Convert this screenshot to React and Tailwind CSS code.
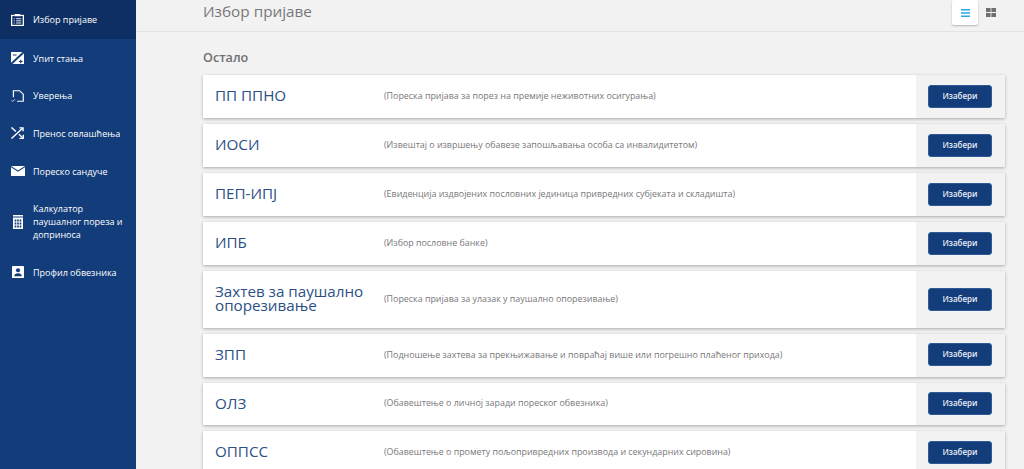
const FONT = { fontFamily: '"Open Sans", sans-serif' };

const IconList = () => (
  <svg width="13" height="12" viewBox="0 0 14 14" preserveAspectRatio="none" fill="none">
    <rect x="0.7" y="1.7" width="12.6" height="11.6" stroke="white" strokeWidth="1.4" />
    <rect x="4" y="0" width="6" height="2.6" fill="white" />
    <path d="M3 5.5h1M5.5 5.5h5.5M3 8h1M5.5 8h5.5M3 10.5h1M5.5 10.5h5.5" stroke="white" strokeWidth="1" />
  </svg>
);

const IconBalance = () => (
  <svg width="13" height="12" viewBox="0 0 14 14" preserveAspectRatio="none">
    <path d="M0 0h14v14H0z" fill="white" />
    <path d="M14 0v1.6L1.6 14H0v-1.6L12.4 0z" fill="#123c7a" />
    <path d="M2 3h4v1.2H2zM8.5 10.4h4v1.2h-4zM9.9 9h1.2v4H9.9z" fill="#123c7a" />
  </svg>
);

const IconCert = () => (
  <svg width="13" height="12" viewBox="0 0 14 14" preserveAspectRatio="none" fill="none" stroke="white" strokeWidth="1.3">
    <path d="M2.6 8.5V0.8h6.6l4 4v8.4H6.5" />
    <path d="M0.5 12l1.4 1.4 2.4-2.6" strokeWidth="0.9" />
  </svg>
);

const IconShuffle = () => (
  <svg width="13" height="12" viewBox="0 0 14 14" preserveAspectRatio="none" fill="none" stroke="white" strokeWidth="1.5">
    <path d="M0.5 0.5L5.2 5.2M8.5 8.5L13 13M0.5 13.5L12.5 1.5" />
    <path d="M9 1h4v4M13.2 9v4.2H9" />
  </svg>
);

const IconMail = () => (
  <svg width="14" height="10" viewBox="0 0 14 11" preserveAspectRatio="none">
    <path d="M0 0h14L7 5z" fill="white" />
    <path d="M0 1.4L7 6.4l7-5V11H0z" fill="white" />
  </svg>
);

const IconCalc = () => (
  <svg width="10" height="14" viewBox="0 0 12 14" preserveAspectRatio="none">
    <rect x="0" y="0" width="12" height="1.5" fill="white" />
    <rect x="0" y="2.5" width="12" height="11.5" fill="white" />
    <path d="M2 4.5h2v2H2zM5 4.5h2v2H5zM8 4.5h2v2H8zM2 7.5h2v2H2zM5 7.5h2v2H5zM8 7.5h2v2H8zM2 10.5h2v2H2zM5 10.5h2v2H5zM8 10.5h2v2H8z" fill="#123c7a" />
  </svg>
);

const IconProfile = () => (
  <svg width="12" height="12" viewBox="0 0 13 13">
    <rect x="0" y="0" width="13" height="13" rx="0.5" fill="white" />
    <circle cx="6.5" cy="4.6" r="2.2" fill="#123c7a" />
    <path d="M2.4 11c0-2.2 1.8-3.2 4.1-3.2s4.1 1 4.1 3.2z" fill="#123c7a" />
  </svg>
);

const navItems = [
  { label: "Избор пријаве", icon: <IconList />, active: true, height: "h-[39px]" },
  { label: "Упит стања", icon: <IconBalance />, height: "h-[38px]" },
  { label: "Уверења", icon: <IconCert />, height: "h-[37px]" },
  { label: "Пренос овлашћења", icon: <IconShuffle />, height: "h-[38px]" },
  { label: "Пореско сандуче", icon: <IconMail />, height: "h-[38px]" },
  { label: "Калкулатор паушалног пореза и доприноса", icon: <IconCalc />, height: "h-[63px]" },
  { label: "Профил обвезника", icon: <IconProfile />, height: "h-[38px]" },
];

const rows = [
  { name: "ПП ППНО", desc: "(Пореска пријава за порез на премије неживотних осигурања)", height: "h-[43px]" },
  { name: "ИОСИ", desc: "(Извештај о извршењу обавезе запошљавања особа са инвалидитетом)", height: "h-[43px]" },
  { name: "ПЕП-ИПЈ", desc: "(Евиденција издвојених пословних јединица привредних субјеката и складишта)", height: "h-[43px]" },
  { name: "ИПБ", desc: "(Избор пословне банке)", height: "h-[43px]" },
  { name: "Захтев за паушално опорезивање", desc: "(Пореска пријава за улазак у паушално опорезивање)", height: "h-[57px]" },
  { name: "ЗПП", desc: "(Подношење захтева за прекњижавање и повраћај више или погрешно плаћеног прихода)", height: "h-[42.7px]" },
  { name: "ОЛЗ", desc: "(Обавештење о личној заради пореског обвезника)", height: "h-[42.7px]" },
  { name: "ОППСС", desc: "(Обавештење о промету пољопривредних производа и секундарних сировина)", height: "h-[43px]" },
];

const Sidebar = () => (
  <aside className="w-[136px] shrink-0 bg-[#123c7a] text-white">
    {navItems.map((item) => (
      <div
        key={item.label}
        className={`flex items-center ${item.height} ${item.active ? "bg-[#0e2f63]" : ""}`}
      >
        <div className="w-[33px] shrink-0 flex justify-center pl-[2px]">{item.icon}</div>
        <span className="text-[9px] leading-[13px] pr-2">{item.label}</span>
      </div>
    ))}
  </aside>
);

const Row = ({ row }) => (
  <div className={`flex shrink-0 bg-white shadow-[0_1px_3px_rgba(0,0,0,0.3)] ${row.height}`}>
    <div className="w-[168px] shrink-0 pl-[12px] pb-[3px] flex items-center text-[15.2px] leading-[14px] text-[#2c4f86]">
      {row.name}
    </div>
    <div className="flex-1 flex items-center pl-[13px] pb-[2px] text-[8.9px] text-[#77777a]">{row.desc}</div>
    <div className="w-[89px] shrink-0 bg-[#f2f2f2] flex items-center pl-[12px] pb-[1px]">
      <button className="w-[64px] h-[23px] pb-[1px] rounded-[3px] border border-[#2f5a96] bg-[#123c7a] text-[#e8edf5] text-[8px] font-semibold">
        Изабери
      </button>
    </div>
  </div>
);

export default function App() {
  return (
    <div className="flex h-[469px] w-[1024px] overflow-hidden bg-[#f2f2f2]" style={FONT}>
      <Sidebar />
      <main className="flex-1 min-w-0 flex flex-col">
        <header className="h-[32px] shrink-0 flex items-start justify-between border-b border-[#e3e3e3] pl-[67px] pr-[20px]">
          <h1 className="text-[15.3px] leading-[22px] text-[#77777a]">Избор пријаве</h1>
          <div className="flex">
            <div className="w-[26px] h-[25px] bg-white rounded-[2px] shadow-[0_1px_2px_rgba(0,0,0,0.25)] flex items-center justify-center">
              <svg width="9" height="8" viewBox="0 0 9 8" fill="#29a9e0">
                <path d="M0 0h9v1.6H0zM0 3.2h9v1.6H0zM0 6.4h9V8H0z" />
              </svg>
            </div>
            <div className="w-[26px] h-[25px] flex items-center justify-center">
              <svg width="10" height="9" viewBox="0 0 10 9" fill="#6f6f6f">
                <path d="M0 0h4.6v4H0zM5.4 0H10v4H5.4zM0 5h4.6v4H0zM5.4 5H10v4H5.4z" />
              </svg>
            </div>
          </div>
        </header>
        <div className="pl-[67px] pr-[19px] flex-1 min-h-0 flex flex-col">
          <h2 className="mt-[17px] mb-[8px] text-[12.6px] leading-[18px] font-semibold text-[#6f6f72]">Остало</h2>
          <div className="flex flex-col gap-[6px]">
            {rows.map((row) => (
              <Row key={row.name} row={row} />
            ))}
          </div>
        </div>
      </main>
    </div>
  );
}
